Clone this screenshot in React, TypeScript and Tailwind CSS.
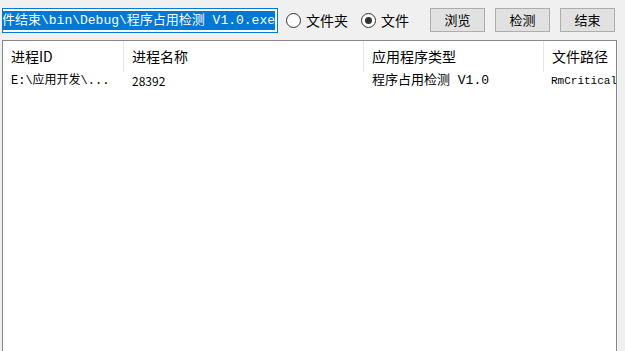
import { useState } from 'react';

const mono = 'font-["Liberation_Mono","Noto_Sans_CJK_SC",monospace]';
const sans = 'font-["Noto_Sans_CJK_SC","Liberation_Sans",sans-serif]';

function Radio({ checked, label }: { checked: boolean; label: string }) {
  return (
    <label className="flex items-center gap-[5px]">
      <span className="flex h-[15px] w-[15px] items-center justify-center rounded-full border border-[#333] bg-white">
        {checked && <span className="h-[7px] w-[7px] rounded-full bg-[#333]" />}
      </span>
      <span className={`${sans} text-[14px] text-black`}>{label}</span>
    </label>
  );
}

function Btn({ children }: { children: string }) {
  return (
    <button className={`${sans} h-[24px] w-[55px] border border-[#adadad] bg-[#e1e1e1] text-[13px] text-black`}>
      {children}
    </button>
  );
}

export default function App() {
  const [mode] = useState('file');
  const columns = [
    { title: '进程ID', width: 'w-[121px]' },
    { title: '进程名称', width: 'w-[240px]' },
    { title: '应用程序类型', width: 'w-[180px]' },
    { title: '文件路径', width: 'flex-1' },
  ];

  return (
    <div className="flex h-[351px] w-[625px] flex-col overflow-hidden bg-[#f0f0f0]">
      <div className="flex h-[40px] items-center pl-[2px] pr-[10px]">
        <div className="flex h-[25px] w-[276px] shrink-0 items-center justify-end overflow-hidden border border-[#0078d7] bg-white px-[2px]">
          <span className={`${mono} shrink-0 whitespace-nowrap bg-[#0078d7] text-[13px] leading-[19px] text-white`}>
            程序占用检测\文件结束\bin\Debug\程序占用检测 V1.0.exe
          </span>
        </div>
        <div className="ml-[8px] flex items-center gap-[13px]">
          <Radio checked={mode === 'folder'} label="文件夹" />
          <Radio checked={mode === 'file'} label="文件" />
        </div>
        <div className="ml-auto flex gap-[10px]">
          <Btn>浏览</Btn>
          <Btn>检测</Btn>
          <Btn>结束</Btn>
        </div>
      </div>

      <div className="mx-[2px] mr-[8px] flex-1 border border-b-0 border-[#828790] bg-white">
        <div className="flex h-[31px]">
          {columns.map((c, i) => (
            <div
              key={c.title}
              className={`${c.width} ${sans} flex items-center overflow-hidden whitespace-nowrap pl-[8px] text-[14px] text-black ${i < 3 ? 'border-r border-[#e5e5e5]' : ''}`}
            >
              {c.title}
            </div>
          ))}
        </div>
        <div className="flex h-[18px] items-center text-[12px] text-black">
          <div className={`${mono} w-[121px] overflow-hidden whitespace-nowrap pl-[8px]`}>E:\应用开发\...</div>
          <div className={`${sans} w-[240px] pl-[8px]`}>28392</div>
          <div className={`${mono} w-[180px] pl-[8px] text-[13px]`}>程序占用检测 V1.0</div>
          <div className={`${mono} flex-1 overflow-hidden whitespace-nowrap pl-[7px] text-[11px]`}>RmCritical</div>
        </div>
      </div>
    </div>
  );
}
